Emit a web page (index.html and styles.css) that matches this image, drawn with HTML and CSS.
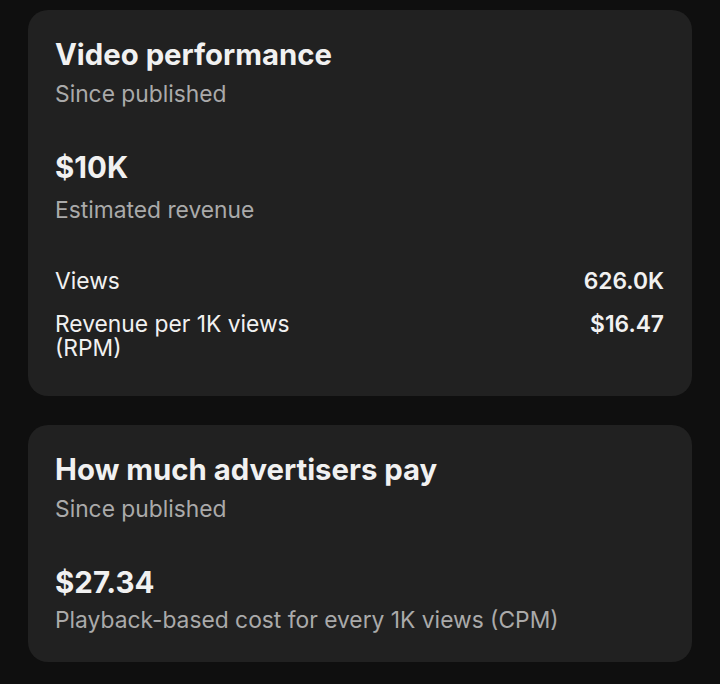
FILE: index.html
```html
<!DOCTYPE html>
<html lang="en">
<head>
<meta charset="utf-8">
<title>Video performance</title>
<link rel="stylesheet" href="styles.css">
</head>
<body>
<main class="page">
  <section class="card card-perf">
    <header class="card-head">
      <h2 class="card-title">Video performance</h2>
      <p class="card-sub">Since published</p>
    </header>
    <div class="stat">
      <div class="stat-value">$10K</div>
      <div class="stat-label stat-label-wide">Estimated revenue</div>
    </div>
    <div class="rows">
      <div class="row">
        <span class="row-label">Views</span>
        <span class="row-value">626.0K</span>
      </div>
      <div class="row">
        <span class="row-label">Revenue per 1K views (RPM)</span>
        <span class="row-value">$16.47</span>
      </div>
    </div>
  </section>
  <section class="card card-ads">
    <header class="card-head">
      <h2 class="card-title">How much advertisers pay</h2>
      <p class="card-sub">Since published</p>
    </header>
    <div class="stat">
      <div class="stat-value">$27.34</div>
      <div class="stat-label">Playback-based cost for every 1K views (CPM)</div>
    </div>
  </section>
</main>
</body>
</html>
```

FILE: styles.css
```css
html, body {
  margin: 0;
  padding: 0;
  background: #0f0f0f;
}
body {
  font-family: Inter, "Liberation Sans", sans-serif;
  color: #f1f1f1;
}
.page {
  display: flex;
  flex-direction: column;
  gap: 29px;
  padding: 10px 28px 0 28px;
}
.card {
  background: #212121;
  border-radius: 20px;
  padding: 28px 28px 36px 27px;
}
.card-ads {
  padding-bottom: 28px;
}
.card-head {
  margin: 0;
}
.card-title {
  margin: 0;
  font-size: 29.3px;
  line-height: 34px;
  font-weight: 700;
  color: #f1f1f1;
}
.card-sub {
  margin: 8px 0 0 0;
  font-size: 22.8px;
  line-height: 28px;
  color: #aaaaaa;
}
.stat {
  margin-top: 42px;
}
.stat-value {
  font-size: 29.5px;
  line-height: 34px;
  font-weight: 700;
  color: #f1f1f1;
}
.stat-label {
  margin-top: 7px;
  font-size: 22.8px;
  line-height: 28px;
  color: #aaaaaa;
}
.stat-label-wide {
  margin-top: 12px;
}
.rows {
  margin-top: 45px;
  display: flex;
  flex-direction: column;
  gap: 19px;
}
.row {
  display: flex;
  justify-content: space-between;
  align-items: flex-start;
  font-size: 22.8px;
  line-height: 24px;
}
.row-label {
  width: 45%;
  color: #f1f1f1;
}
.row-value {
  font-weight: 600;
  color: #f1f1f1;
}
```
